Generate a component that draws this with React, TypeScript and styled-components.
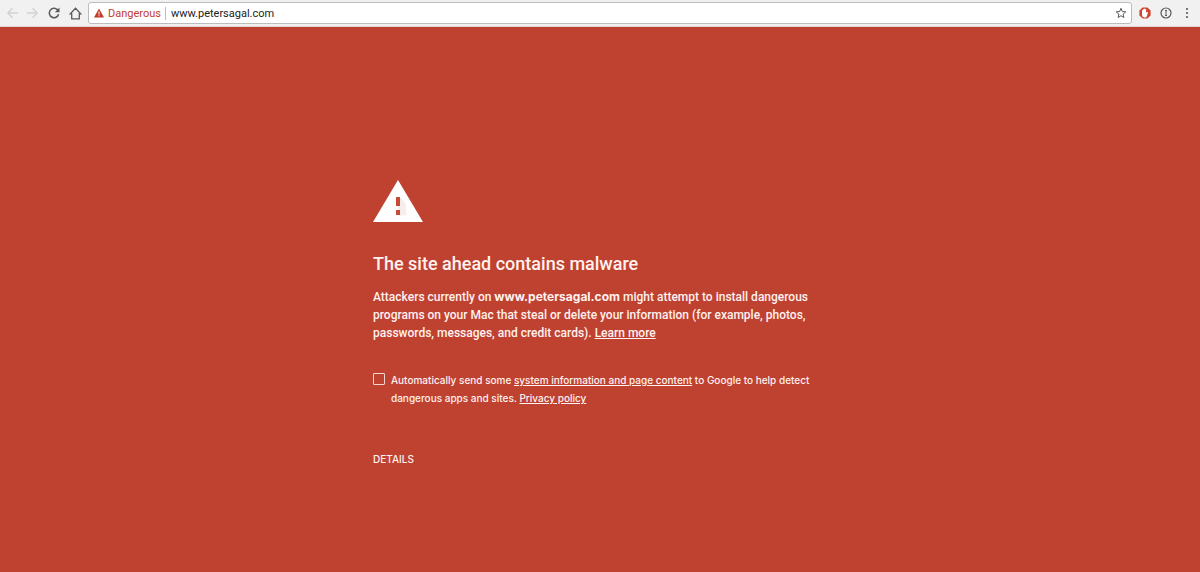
import React from "react";
import styled, { createGlobalStyle } from "styled-components";

const GlobalStyle = createGlobalStyle`
  * { box-sizing: border-box; }
  body {
    margin: 0;
    background: #bf4130;
    font-family: Roboto, "Liberation Sans", sans-serif;
  }
`;

const Toolbar = styled.header`
  display: flex;
  align-items: center;
  height: 27px;
  padding: 0 3px 0 4px;
  background: #f1f1f2;
  border-bottom: 1px solid #e3d3d2;
`;

const IconButton = styled.button<{ $width?: number; $color?: string }>`
  display: flex;
  flex: none;
  align-items: center;
  justify-content: center;
  width: ${({ $width = 21 }) => $width}px;
  height: 20px;
  padding: 0;
  border: 0;
  background: none;
  color: ${({ $color = "#5a5a5a" }) => $color};
`;

const AddressBar = styled.div`
  display: flex;
  flex: 1;
  align-items: center;
  min-width: 0;
  height: 22px;
  margin-right: 2px;
  padding-left: 5px;
  background: #fff;
  border: 1px solid #bcbcbe;
  border-radius: 3px;
`;

const SecurityChip = styled.button`
  display: flex;
  align-items: center;
  gap: 4px;
  height: 13px;
  padding: 0 4px 0 0;
  border: 0;
  border-right: 1px solid #bdbdbd;
  background: none;
  color: #c23b2c;
  font: 400 11px/13px Roboto, "Liberation Sans", sans-serif;
`;

const UrlInput = styled.input`
  flex: 1;
  min-width: 0;
  height: 17px;
  padding: 0 5px;
  border: 0;
  outline: 0;
  background: none;
  color: #1c1c1c;
  font: 400 11px/17px Roboto, "Liberation Sans", sans-serif;
`;

const Interstitial = styled.main`
  max-width: 454px;
  margin: 0 auto;
  padding: 152px 0 80px;
  color: #fff1ef;
`;

const WarningIcon = styled.svg`
  display: block;
  width: 50px;
  height: 44px;
`;

const Title = styled.h1`
  margin: 29px 0 12px;
  font-size: 18px;
  font-weight: 500;
  line-height: 24px;
`;

const Message = styled.p`
  margin: 0;
  font-size: 12px;
  font-weight: 500;
  line-height: 18px;
`;

const SiteName = styled.strong`
  font-family: Inter, "Liberation Sans", sans-serif;
  font-weight: 700;
  line-height: 1;
`;

const Link = styled.a`
  color: inherit;
  text-decoration: underline;
`;

const OptIn = styled.div`
  display: flex;
  align-items: flex-start;
  gap: 6px;
  margin-top: 29px;
`;

const Checkbox = styled.input`
  flex: none;
  appearance: none;
  width: 12px;
  height: 12px;
  margin: 2px 0 0;
  border: 1px solid #f6d5d0;
  border-radius: 1px;
  background: transparent;

  &:checked { background: #fcecea; }
`;

const OptInLabel = styled.label`
  font-family: Inter, "Liberation Sans", sans-serif;
  font-size: 10px;
  font-weight: 500;
  line-height: 18px;
`;

const DetailsButton = styled.button`
  display: block;
  margin-top: 43px;
  padding: 0;
  border: 0;
  background: none;
  color: inherit;
  font: 500 10px/18px Inter, "Liberation Sans", sans-serif;
  text-transform: uppercase;
`;

export default function App() {
  return (
    <>
      <GlobalStyle />
      <Toolbar>
        <IconButton $width={17} $color="#d2d2d2" aria-label="Back">
          <svg width="13" height="12" viewBox="0 0 13 12" fill="none" stroke="currentColor" strokeWidth="1.4">
            <path d="M12 6H2M6.5 1.3 1.8 6l4.7 4.7" />
          </svg>
        </IconButton>
        <IconButton $width={23} $color="#d2d2d2" aria-label="Forward">
          <svg width="13" height="12" viewBox="0 0 13 12" fill="none" stroke="currentColor" strokeWidth="1.4">
            <path d="M1 6h10M6.500 1.300 11.200 6l-4.700 4.700" />
          </svg>
        </IconButton>
        <IconButton $width={20} aria-label="Reload">
          <svg width="12" height="12" viewBox="0 0 12 12" fill="none" stroke="currentColor" strokeWidth="1.5">
            <path d="M10.600 7.200A4.700 4.700 0 1 1 9.300 2.600L10 3.300" />
            <path d="M11.500 .5v4.700H6.800z" fill="currentColor" stroke="none" />
          </svg>
        </IconButton>
        <IconButton $width={24} aria-label="Home">
          <svg width="14" height="13" viewBox="0 0 14 13" fill="none" stroke="currentColor" strokeWidth="1.3">
            <path d="M6.500 1.200 1.300 6.900h1.400v5h7.600v-5h1.400z" />
          </svg>
        </IconButton>
        <AddressBar>
          <SecurityChip>
            <svg width="10" height="10" viewBox="0 0 10 10">
              <path d="M5 .5 10 9.500H0z" fill="#c23b2c" />
              <path d="M4.500 3.500h1v3h-1zM4.500 7.300h1v1h-1z" fill="#fff" />
            </svg>
            Dangerous
          </SecurityChip>
          <UrlInput aria-label="Address" defaultValue="www.petersagal.com" />
          <IconButton aria-label="Bookmark this page">
            <svg width="12" height="12" viewBox="0 0 12 12" fill="none" stroke="currentColor" strokeWidth="1">
              <path d="m6 1.300 1.300 3.200 3.500.3-2.700 2.300.8 3.400L6 8.700l-2.900 1.800.8-3.400L1.200 4.800l3.500-.3z" />
            </svg>
          </IconButton>
        </AddressBar>
        <IconButton aria-label="Ad blocker">
          <svg width="12" height="12" viewBox="0 0 12 12">
            <path d="M3.600.4h4.800l3.200 3.200v4.800l-3.200 3.200H3.600L.4 8.400V3.600z" fill="#d0432f" />
            <path d="M3 6V3.300q.5-.5 1 0V2.200q.5-.5 1 0v-.5q.5-.6 1 0v.5q.6-.5 1.100 0v3.600l.8-.9q.9-.2 1.100.4L7.900 9.200q-.5 1.300-1.600 1.300H5.100Q3 10.200 3 8z" fill="#fff" />
          </svg>
        </IconButton>
        <IconButton aria-label="Site information">
          <svg width="12" height="12" viewBox="0 0 12 12" fill="none" stroke="currentColor">
            <circle cx="6" cy="6" r="5" strokeWidth="1.200" />
            <path d="M6 3v6M5 3.500h2M5 8.500h2" />
          </svg>
        </IconButton>
        <IconButton aria-label="Menu">
          <svg width="4" height="12" viewBox="0 0 4 12" fill="currentColor">
            <circle cx="2" cy="2" r="1.100" />
            <circle cx="2" cy="6" r="1.100" />
            <circle cx="2" cy="10" r="1.100" />
          </svg>
        </IconButton>
      </Toolbar>
      <Interstitial>
        <WarningIcon viewBox="0 0 50 44" role="img" aria-label="Warning">
          <path d="M25 1 50 43H0z" fill="#fff" />
          <path d="M27 18l6 7v6l1 5-7 1-4-1z" fill="#f7eeec" />
          <path d="M23 18h4v9h-4zM23 31h4v5h-4z" fill="#c64a3a" />
        </WarningIcon>
        <Title>The site ahead contains malware</Title>
        <Message>
          Attackers currently on <SiteName>www.petersagal.com</SiteName> might attempt to install dangerous
          programs on your Mac that steal or delete your information (for example, photos,
          passwords, messages, and credit cards). <Link href="#learn-more">Learn more</Link>
        </Message>
        <OptIn>
          <Checkbox type="checkbox" id="report" />
          <OptInLabel htmlFor="report">
            Automatically send some <Link href="#system-information">system information and page content</Link> to
            Google to help detect dangerous apps and sites. <Link href="#privacy">Privacy policy</Link>
          </OptInLabel>
        </OptIn>
        <DetailsButton>Details</DetailsButton>
      </Interstitial>
    </>
  );
}
